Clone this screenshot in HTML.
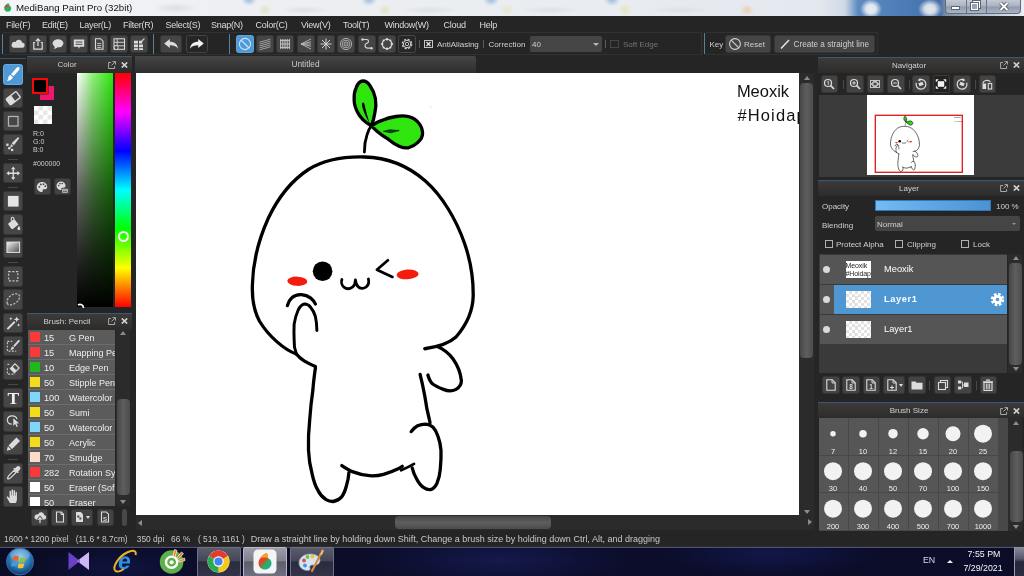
<!DOCTYPE html>
<html>
<head>
<meta charset="utf-8">
<title>MediBang Paint Pro (32bit)</title>
<style>
*{box-sizing:border-box;margin:0;padding:0}
html,body{width:1024px;height:576px;overflow:hidden;background:#252525;font-family:"Liberation Sans",sans-serif;font-size:9px;color:#d8d8d8}
.abs{position:absolute}
#root{position:relative;width:1024px;height:576px;overflow:hidden;background:#252525;will-change:transform}
#title{left:0;top:0;width:1024px;height:16px;background:
radial-gradient(ellipse 11px 10px at 871px 9px,#e9eef4 0,#dfe6ee 45%,rgba(223,230,238,0) 100%),
radial-gradient(ellipse 12px 10px at 930px 9px,#e4e9ee 0,#d5dde6 45%,rgba(213,221,230,0) 100%),
radial-gradient(ellipse 8px 6px at 249px 0px,#9dbde0 0,rgba(157,189,224,0) 100%),
radial-gradient(ellipse 8px 6px at 369px 0px,#9dbde0 0,rgba(157,189,224,0) 100%),
radial-gradient(ellipse 8px 6px at 491px 0px,#9dbde0 0,rgba(157,189,224,0) 100%),
radial-gradient(ellipse 8px 6px at 612px 0px,#9dbde0 0,rgba(157,189,224,0) 100%),
radial-gradient(ellipse 7px 6px at 265px 10px,#e2e2c4 0,rgba(226,226,196,0) 100%),
radial-gradient(ellipse 7px 6px at 385px 10px,#e2e2c4 0,rgba(226,226,196,0) 100%),
radial-gradient(ellipse 7px 6px at 625px 10px,#ebe4b4 0,rgba(235,228,180,0) 100%),
radial-gradient(ellipse 7px 6px at 507px 10px,#e6e6c8 0,rgba(230,230,200,0) 100%),
radial-gradient(ellipse 26px 4px at 305px 10px,#dde0e4 0,rgba(221,224,228,0) 100%),
radial-gradient(ellipse 30px 4px at 430px 10px,#dde0e4 0,rgba(221,224,228,0) 100%),
radial-gradient(ellipse 30px 4px at 550px 10px,#dde0e4 0,rgba(221,224,228,0) 100%),
radial-gradient(ellipse 30px 4px at 680px 10px,#dde0e4 0,rgba(221,224,228,0) 100%),
radial-gradient(ellipse 7px 6px at 747px 10px,#edcdb0 0,rgba(237,205,176,0) 100%),
radial-gradient(ellipse 22px 6px at 175px 8px,#dcdfe3 0,rgba(220,223,227,0) 100%),
linear-gradient(90deg,#f3f5f7 0,#eef0f3 200px,#e9ecf0 600px,#e3e8ef 820px,#cfd9e6 845px,#5d8ac0 858px,#4d7db8 900px,#456fa8 940px,#8090a4 946px,#e6eaf0 1021px,#eef1f5 1024px)}
#title .t{left:16px;top:1px;font-size:9.700px;color:#111;line-height:14px;white-space:nowrap}
#menu{left:0;top:16px;width:1024px;height:16px;background:#252525}
#menu span{position:absolute;top:2.600px;font-size:9px;letter-spacing:-.250px;line-height:12px;color:#dcdcdc;white-space:nowrap}
#tb{left:0;top:32px;width:1024px;height:25px;background:#252525}
.tbtn{position:absolute;top:3px;width:18px;height:18px;border-radius:2.500px;background:#454545;border:1px solid #363636}
.tbtn.sel{background:#4f9ad6;border-color:#5aa6e0}
.tbtn svg{position:absolute;left:0;top:0;width:16px;height:16px}
.vsep{position:absolute;width:1px;background:#56809f}
.lbl{position:absolute;white-space:nowrap;font-size:8px;line-height:11px;color:#d0d0d0}
.phead{position:absolute;height:16px;background:linear-gradient(#3d3b3a,#2d2c2b);border-top:1px solid #35597a;color:#d0d0d0;font-size:8px;line-height:15px;text-align:center}
.tool{position:absolute;left:2.700px;width:20.500px;height:20.500px;border-radius:2.500px;background:#464646;border:1px solid #363636}
.tool.sel{background:#4f9ad6;border-color:#62abe3}
.tool svg{position:absolute;left:0;top:0;width:18.500px;height:18.500px}
.brow{position:absolute;left:0;width:88px;height:14px;background:#5b5b5b;color:#eeeeee;font-size:9.600px;line-height:15.200px;white-space:nowrap;overflow:hidden}
.brow i{position:absolute;left:2.300px;top:2.300px;width:9.800px;height:9.400px}
.brow b{position:absolute;left:16px;font-weight:normal;font-size:9.800px;transform:scaleX(.940);transform-origin:0 50%}
.brow span{position:absolute;left:40.500px;transform:scaleX(.940);transform-origin:0 50%}
.sbtn{position:absolute;width:16px;height:16px;border-radius:2.500px;background:#434343;border:1px solid #343434}
.sbtn svg{position:absolute;left:0;top:0;width:14px;height:14px}
.nbtn{position:absolute;top:18.500px;width:17.500px;height:17.500px;border-radius:2.500px;background:#434343;border:1px solid #343434}
.nbtn svg{position:absolute;left:.750px;top:.750px;width:14px;height:14px}
.bs{position:absolute;width:30px;height:37.500px;background:#565656;border-right:1px solid #484848;border-bottom:1px solid #484848}
.bs i{position:absolute;background:#f2f2f2;border-radius:50%}
.bs span{position:absolute;left:-1px;width:30px;bottom:-1px;text-align:center;font-size:7.500px;line-height:9px;color:#eeeeee}
.thumb{position:absolute;border-radius:4px;background:linear-gradient(90deg,#474747,#5e5e5e 50%,#4c4c4c)}
.thumbh{position:absolute;border-radius:4px;background:linear-gradient(#474747,#5e5e5e 50%,#4c4c4c)}
.track{position:absolute;background:#2b2b2b}
</style>
</head>
<body>
<div id="root">
<!-- TITLE BAR -->
<div id="title" class="abs">
<div class="abs t">MediBang Paint Pro (32bit)</div>
<div class="abs" style="left:945px;top:0;width:76px;height:14px;border:1px solid #5f6c7e;border-top:0;border-radius:0 0 4px 4px;background:linear-gradient(#c3cad4,#a9b2c0 48%,#8f9aac 52%,#aab4c2)"></div>
<div class="abs" style="left:966px;top:0;width:1px;height:13px;background:#66738a"></div>
<div class="abs" style="left:986px;top:0;width:1px;height:13px;background:#66738a"></div>
<div class="abs" style="left:951px;top:5.500px;width:9px;height:4px;background:#fff;border:1px solid #5a6474"></div>
<div class="abs" style="left:973px;top:1px;width:7px;height:7px;border:1.500px solid #fff;outline:1px solid #5a6474"></div>
<div class="abs" style="left:971px;top:3px;width:7px;height:7px;border:1.500px solid #fff;outline:1px solid #5a6474;background:#98a3b4"></div>
<svg class="abs" style="left:998px;top:1.500px" width="12" height="9" viewBox="0 0 12 9"><path d="M2.500 1l7 7M9.500 1l-7 7" stroke="#4a5464" stroke-width="3.600"/><path d="M2.500 1l7 7M9.500 1l-7 7" stroke="#fff" stroke-width="1.900"/></svg>
<svg class="abs" style="left:1px;top:1px" width="13" height="13" viewBox="0 0 13 13"><circle cx="6.500" cy="6.500" r="6" fill="#f4f4f4"/><path d="M7.500 2C5 3 3.200 5 3.200 7.300c0 2 1.500 3.500 3.500 3.500s3.500-1.500 3.500-3.500c0-1.300-.8-2.300-1.900-2.800.2-1-.1-1.800-.8-2.500z" fill="#28b060"/><path d="M3.300 6.600c1 .5 3.200 0 5-2.100-2-1-4.300 0-5 2.100z" fill="#e8402a"/><path d="M7 9.500c1.500 0 2.800-1 3-2.500-.5 1-2 2-3 2.500z" fill="#18a8d8"/></svg>
</div>
<!-- MENU -->
<div id="menu" class="abs">
<span style="left:6px">File(F)</span>
<span style="left:42px">Edit(E)</span>
<span style="left:79.5px">Layer(L)</span>
<span style="left:123px">Filter(R)</span>
<span style="left:165.5px">Select(S)</span>
<span style="left:211px">Snap(N)</span>
<span style="left:255.5px">Color(C)</span>
<span style="left:301px">View(V)</span>
<span style="left:343px">Tool(T)</span>
<span style="left:384.5px">Window(W)</span>
<span style="left:443.5px">Cloud</span>
<span style="left:479.5px">Help</span>
</div>
<!-- TOOLBAR -->
<div id="tb" class="abs">
<div class="vsep" style="left:2px;top:2px;height:20px"></div>
<div class="tbtn " style="left:9px;width:18px"><svg viewBox="0 0 16 16"><path d="M3.800 11.800h8.200a2.500 2.500 0 0 0 .3-5A3.500 3.500 0 0 0 5.600 6 2.900 2.900 0 0 0 3.800 11.800z" fill="#dcdcdc"/></svg></div>
<div class="tbtn " style="left:29px;width:18px"><svg viewBox="0 0 16 16"><path d="M5.200 6.500H3.800v6.700h8.400V6.500h-1.400" fill="none" stroke="#dcdcdc" stroke-width="1.200"/><path d="M8 10V3.200M5.800 5.200 8 2.800l2.200 2.400" fill="none" stroke="#dcdcdc" stroke-width="1.200"/></svg></div>
<div class="tbtn " style="left:49px;width:18px"><svg viewBox="0 0 16 16"><ellipse cx="8" cy="7.300" rx="5.400" ry="4" fill="#dcdcdc"/><path d="M5 10l-.8 3.200L8 11z" fill="#dcdcdc"/></svg></div>
<div class="tbtn " style="left:70px;width:18px"><svg viewBox="0 0 16 16"><path d="M2.800 3.500h10.400v7.300H9l-1.500 2.200V10.800H2.800z" fill="#dcdcdc"/><path d="M4.600 6h6.800M4.600 8.300h6.800" stroke="#454545" stroke-width="1"/></svg></div>
<div class="tbtn " style="left:90px;width:18px"><svg viewBox="0 0 16 16"><path d="M4.500 2.700h5L12 5.200v8.100H4.500z" fill="none" stroke="#dcdcdc" stroke-width="1.100"/><path d="M6.200 7.500h4M6.200 9.500h4M6.200 11.500h4" stroke="#dcdcdc" stroke-width=".8"/></svg></div>
<div class="tbtn " style="left:110px;width:18px"><svg viewBox="0 0 16 16"><rect x="3" y="2.800" width="10.500" height="10.500" fill="none" stroke="#dcdcdc" stroke-width="1"/><path d="M3 6.300h10.500M3 9.800h10.500M6.200 2.800v10.500" stroke="#dcdcdc" stroke-width=".9"/><circle cx="5.200" cy="11.600" r="2" fill="#454545" stroke="#dcdcdc" stroke-width=".9"/></svg></div>
<div class="tbtn " style="left:130px;width:18px"><svg viewBox="0 0 16 16"><path d="M3 4.800h4v2.800H3zM8 4.800h3.200v2.800H8zM3 8.500h4v2.800H3zM8 8.500h4v2.800H8zM3 12.200h4V14H3zM8 12.200h4V14H8z" fill="#dcdcdc"/><path d="M10.800 5.200l2.600-2.600" stroke="#dcdcdc" stroke-width="1.200"/></svg></div>
<div class="vsep" style="left:153px;top:2px;height:20px"></div>
<div class="tbtn " style="left:160px;width:22px"><svg viewBox="0 0 20 16" style="width:20px"><path d="M3.200 7.400 8.800 3v2.700c4.800 0 7.800 2.400 8.200 7-1.900-2.700-4.300-3.500-8.200-3.500v2.700z" fill="#dcdcdc"/></svg></div>
<div class="tbtn" style="left:186px;width:22px;background:#262626;border-color:#444"><svg viewBox="0 0 20 16" style="width:20px"><path d="M16.800 7.400 11.200 3v2.700c-4.800 0-7.800 2.400-8.200 7 1.900-2.700 4.300-3.500 8.200-3.500v2.700z" fill="#f2f2f2"/></svg></div>
<div class="vsep" style="left:229px;top:2px;height:20px"></div>
<div class="tbtn sel" style="left:236px;width:18px"><svg viewBox="0 0 16 16"><circle cx="8" cy="8" r="5.600" fill="none" stroke="#cfe4f8" stroke-width="1.100"/><path d="M4 4l8 8" stroke="#cfe4f8" stroke-width="1.100"/></svg></div>
<div class="tbtn " style="left:256px;width:18px"><svg viewBox="0 0 16 16"><path d="M2.500 6.200 13.500 3.200M2.500 8.100 13.500 5.100M2.500 10 13.500 7M2.500 11.900 13.500 8.900M2.500 13.800 13.500 10.800" stroke="#a8a8a8" stroke-width=".9"/></svg></div>
<div class="tbtn " style="left:276px;width:18px"><svg viewBox="0 0 16 16"><path d="M3.500 3v10M5.300 3v10M7.100 3v10M8.900 3v10M10.700 3v10M12.500 3v10M3 4.500h10M3 8h10M3 11.500h10" stroke="#c4c4c4" stroke-width=".9"/></svg></div>
<div class="tbtn " style="left:297px;width:18px"><svg viewBox="0 0 16 16"><path d="M3 8 13 3M3 8l10-2.200M3 8h10M3 8l10 2.200M3 8l10 5" stroke="#bcbcbc" stroke-width=".9"/></svg></div>
<div class="tbtn " style="left:317px;width:18px"><svg viewBox="0 0 16 16"><path d="M8 2.500v11M2.500 8h11M4 4l8 8M12 4l-8 8" stroke="#d4d4d4" stroke-width="1"/></svg></div>
<div class="tbtn " style="left:337px;width:18px"><svg viewBox="0 0 16 16"><circle cx="8" cy="8" r="5.600" fill="none" stroke="#b8b8b8" stroke-width=".9"/><circle cx="8" cy="8" r="3.800" fill="none" stroke="#b8b8b8" stroke-width=".9"/><circle cx="8" cy="8" r="2" fill="none" stroke="#b8b8b8" stroke-width=".9"/><circle cx="8" cy="8" r=".7" fill="#b8b8b8"/></svg></div>
<div class="tbtn " style="left:358px;width:18px"><svg viewBox="0 0 16 16"><path d="M3.500 3.500h4.200c2.400 0 2.400 3.200 0 3.800-2.600.8-2.200 4.600.8 4.900h3.500" fill="none" stroke="#d4d4d4" stroke-width="1.200"/><circle cx="3.500" cy="3.500" r="1.200" fill="#d4d4d4"/><circle cx="12.500" cy="12.200" r="1.200" fill="#d4d4d4"/></svg></div>
<div class="tbtn " style="left:378px;width:18px"><svg viewBox="0 0 16 16"><circle cx="8" cy="8" r="4.800" fill="none" stroke="#dadada" stroke-width="1.100"/><circle cx="8" cy="3.200" r="1.200" fill="#dadada"/><circle cx="8" cy="12.800" r="1.200" fill="#dadada"/><circle cx="3.200" cy="8" r="1.200" fill="#dadada"/><circle cx="12.800" cy="8" r="1.200" fill="#dadada"/><circle cx="4.600" cy="4.600" r="1" fill="#dadada"/><circle cx="11.400" cy="4.600" r="1" fill="#dadada"/><circle cx="4.600" cy="11.400" r="1" fill="#dadada"/><circle cx="11.400" cy="11.400" r="1" fill="#dadada"/></svg></div>
<div class="tbtn" style="left:398px;background:#262626;border-color:#484848"><svg viewBox="0 0 16 16"><circle cx="8" cy="8" r="4.600" fill="none" stroke="#c4c4c4" stroke-width="1.500" stroke-dasharray="2.200 1.410"/><circle cx="8" cy="8" r="3.700" fill="none" stroke="#c4c4c4" stroke-width="1"/><circle cx="8" cy="8" r="1.700" fill="none" stroke="#c4c4c4" stroke-width="1"/></svg></div>
<div class="vsep" style="left:419px;top:8px;height:8px;background:#5c5c5c"></div>
<div class="abs" style="left:424px;top:8px;width:9px;height:8px;border:1px solid #c4c4c4"><svg class="abs" style="left:0;top:0" width="7" height="6" viewBox="0 0 7 6"><path d="M1.500 1l4 4M5.500 1l-4 4" stroke="#e6e6e6" stroke-width="1.300"/></svg></div>
<span class="lbl" style="left:437px;top:7px">AntiAliasing</span>
<div class="vsep" style="left:483px;top:8px;height:8px;background:#5c5c5c"></div>
<span class="lbl" style="left:488.500px;top:7px">Correction</span>
<div class="abs" style="left:530px;top:4px;width:72px;height:15.500px;background:#454545;border-radius:2px"><span class="lbl" style="left:2px;top:3px">40</span><div class="abs" style="left:63px;top:6.500px;border:3px solid transparent;border-top:3px solid #b8b8b8;border-bottom:0"></div></div>
<div class="vsep" style="left:605px;top:8px;height:8px;background:#5c5c5c"></div>
<div class="abs" style="left:610px;top:8px;width:9px;height:8px;border:1px solid #454545"></div>
<span class="lbl" style="left:623px;top:7px;color:#747474">Soft Edge</span>
<div class="abs" style="left:705px;top:0px;width:173px;height:23px;border:1px solid #313131;border-left:0"></div>
<div class="abs" style="left:3px;top:0px;width:699px;height:23px;border:1px solid #313131;border-left:0"></div>
<div class="vsep" style="left:704px;top:1px;height:21px"></div>
<span class="lbl" style="left:709.500px;top:7px">Key</span>
<div class="abs" style="left:725px;top:3px;width:46px;height:18px;background:#454545;border:1px solid #363636;border-radius:2.500px"><svg class="abs" style="left:2px;top:1px" width="14" height="14" viewBox="0 0 14 14"><circle cx="7" cy="7" r="5.400" fill="none" stroke="#d4d4d4" stroke-width="1.100"/><path d="M3.200 3.200l7.600 7.600" stroke="#d4d4d4" stroke-width="1.100"/></svg><span class="lbl" style="left:18px;top:3px">Reset</span></div>
<div class="abs" style="left:774px;top:3px;width:101px;height:18px;background:#454545;border:1px solid #363636;border-radius:2.500px"><svg class="abs" style="left:4px;top:2px" width="12" height="12" viewBox="0 0 12 12"><path d="M2 10.500 10 2" stroke="#e4e4e4" stroke-width="1.500"/></svg><span class="lbl" style="left:18.500px;top:3px;font-size:8.200px">Create a straight line</span></div>
</div>
<!-- LEFT TOOLS -->
<div id="tools" class="abs" style="left:0;top:57px;width:27px;height:474px;background:#252525">
<div class="abs" style="left:0;top:1px;width:26px;height:1px;background:#35546e"></div>
<div class="tool sel" style="top:7.3px"><svg viewBox="0 0 19 19"><path d="M15.300 2.300c.9.600 1 1.600.3 2.500L9.800 11.600 7.200 9.400l6-6.800c.6-.7 1.400-.8 2.100-.3z" fill="#fff"/><path d="M6.400 10.200 9 12.400c-.3 2.200-2.600 4.200-6.400 3.800 1.500-.9 1.600-2 1.800-3.200.2-1.300.8-2.400 2-2.800z" fill="#fff"/></svg></div>
<div class="tool" style="top:30.6px"><svg viewBox="0 0 19 19"><g transform="rotate(-38 9.500 9.500)"><rect x="3" y="5.700" width="13" height="7.600" rx="1" fill="none" stroke="#dcdcdc" stroke-width="1.400"/><rect x="3" y="5.700" width="6.500" height="7.600" rx="1" fill="#dcdcdc"/></g></svg></div>
<div class="tool" style="top:53.9px"><svg viewBox="0 0 19 19"><rect x="4.600" y="4.600" width="9.800" height="9.800" fill="none" stroke="#b4b4b4" stroke-width="1.300"/></svg></div>
<div class="tool" style="top:77.2px"><svg viewBox="0 0 19 19"><path d="M15.800 3.200 10.200 10.400 7.800 8.400 14.300 2.200z" fill="#dcdcdc"/><path d="M7.200 9.200 9.500 11.200 6.200 13z" fill="#dcdcdc"/><rect x="2.300" y="8.800" width="2.400" height="2.400" fill="#dcdcdc"/><rect x="4.600" y="11.600" width="2.400" height="2.400" fill="#dcdcdc" opacity=".0"/><rect x="4.300" y="12.400" width="2.300" height="2.300" fill="#dcdcdc"/><rect x="7.200" y="14.200" width="2.300" height="2.300" fill="#dcdcdc"/></svg></div>
<div class="tool" style="top:105.7px"><svg viewBox="0 0 19 19"><path d="M9.500 2.500 11.800 5.300h-1.600v3.500H13.700V7.200l2.800 2.300-2.800 2.300v-1.600h-3.500v3.500h1.600L9.500 16.500 7.200 13.700h1.600v-3.500H5.300v1.600L2.500 9.500l2.800-2.300v1.600h3.500V5.300H7.200z" fill="#dcdcdc"/></svg></div>
<div class="tool" style="top:133.8px"><svg viewBox="0 0 19 19"><rect x="4" y="4" width="11" height="11" fill="#e4e4e4"/></svg></div>
<div class="tool" style="top:157.1px"><svg viewBox="0 0 19 19"><path d="M5 8.200 10.500 4l4.500 5.800-5.600 4.400c-.7.500-1.500.4-2-.3L4.600 10c-.5-.7-.3-1.300.4-1.800z" fill="#dcdcdc"/><path d="M7.500 6.200V3.600c0-1.600 2.600-1.600 2.600 0v1" fill="none" stroke="#dcdcdc" stroke-width="1.100"/><path d="M15.300 11c.9 1.500 1.500 2.400 1.500 3.200a1.500 1.500 0 0 1-3 0c0-.8.600-1.700 1.500-3.200z" fill="#dcdcdc"/></svg></div>
<div class="tool" style="top:180.4px"><svg viewBox="0 0 19 19"><defs><linearGradient id="gg" x1="0" y1="0" x2="1" y2="1"><stop offset="0" stop-color="#f4f4f4"/><stop offset="1" stop-color="#4c4c4c"/></linearGradient></defs><rect x="3" y="4.200" width="13" height="10.600" fill="url(#gg)" stroke="#dcdcdc" stroke-width="1.100"/></svg></div>
<div class="tool" style="top:209.0px"><svg viewBox="0 0 19 19"><rect x="4.800" y="4.800" width="9.400" height="9.400" fill="none" stroke="#c8c8c8" stroke-width="1.200" stroke-dasharray="2.100 1.600"/></svg></div>
<div class="tool" style="top:232.3px"><svg viewBox="0 0 19 19"><path d="M3.500 14C1.800 10.500 5.500 5 11.200 4c4.400-.8 6 2.400 3.800 6.200-2.200 3.700-9.300 7-11.500 3.800z" fill="none" stroke="#bdbdbd" stroke-width="1.300" stroke-dasharray="2.200 1.400"/></svg></div>
<div class="tool" style="top:255.6px"><svg viewBox="0 0 19 19"><path d="M3.500 15.500 11 8" stroke="#dcdcdc" stroke-width="2"/><path d="M13 2.500l.8 2.200 2.200.8-2.200.8L13 8.500l-.8-2.200L10 5.500l2.200-.8zM7 3l.5 1.300L8.800 4.800l-1.300.5L7 6.600l-.5-1.300L5.200 4.800l1.300-.5zM15 9.500l.5 1.300 1.300.5-1.300.5-.5 1.300-.5-1.300-1.300-.5 1.300-.5z" fill="#dcdcdc"/></svg></div>
<div class="tool" style="top:278.9px"><svg viewBox="0 0 19 19"><path d="M3.500 5.500v9h9" fill="none" stroke="#c8c8c8" stroke-width="1.100" stroke-dasharray="2 1.400"/><path d="M3.500 4.500h5" fill="none" stroke="#c8c8c8" stroke-width="1.100" stroke-dasharray="2 1.400"/><path d="M15.800 3.200c.5.400.5 1 .1 1.500l-5 5.600-1.400-1.200 5-5.700c.4-.4.900-.5 1.300-.2zM9 9.800l1.300 1.200c-.2 1.400-1.600 2.400-3.800 2.300.9-.6.900-1.300 1-2 .1-.7.600-1.300 1.500-1.500z" fill="#dcdcdc"/></svg></div>
<div class="tool" style="top:302.2px"><svg viewBox="0 0 19 19"><path d="M3.500 8.500v6h8" fill="none" stroke="#c8c8c8" stroke-width="1.100" stroke-dasharray="2 1.400"/><path d="M3.500 4.500h3" fill="none" stroke="#c8c8c8" stroke-width="1.100" stroke-dasharray="2 1.400"/><path d="M6.500 8.800 11.300 4l4.200 4.200-4.800 4.800z" fill="none" stroke="#dcdcdc" stroke-width="1.200"/><path d="M6.500 8.800 8.700 6.600l4.200 4.200-2.200 2.200z" fill="#dcdcdc"/></svg></div>
<div class="tool" style="top:330.8px"><svg viewBox="0 0 19 19"><text x="9.500" y="15.800" font-family="Liberation Serif,serif" font-weight="bold" font-size="18" text-anchor="middle" fill="#f0f0f0">T</text></svg></div>
<div class="tool" style="top:354.1px"><svg viewBox="0 0 19 19"><path d="M9.500 6.500l6 5-2.700.3 1.500 3-1.300.6-1.500-3-2 1.700z" fill="#dcdcdc"/><path d="M8 12.500c-3 0-4.500-1.700-4.500-4.200C3.500 5.600 5.600 4 8.500 4c2.500 0 4.300 1.200 4.700 3.300" fill="none" stroke="#dcdcdc" stroke-width="1.200"/></svg></div>
<div class="tool" style="top:377.4px"><svg viewBox="0 0 19 19"><path d="M12.800 2.500 16.500 6.200 8.300 14.400 4.600 10.700z" fill="#dcdcdc"/><path d="M4 11.600 7.400 15l-4.600 1.200z" fill="#dcdcdc"/></svg></div>
<div class="tool" style="top:406.0px"><svg viewBox="0 0 19 19"><path d="M13 2.800c1-1 2.400-.8 3.200 0 .8.800 1 2.200 0 3.200l-1.700 1.700.7.700-1.200 1.200-4.600-4.600 1.200-1.200.7.700z" fill="#dcdcdc"/><path d="M10.300 6.600 4.500 12.400l-.9 2.400.6.600 2.400-.9 5.800-5.800z" fill="none" stroke="#dcdcdc" stroke-width="1.200"/></svg></div>
<div class="tool" style="top:429.3px"><svg viewBox="0 0 19 19"><path d="M6.200 16.500c-1-1.400-2.600-4-3.300-5.600-.4-.9.600-1.600 1.300-.8l1.500 1.800V4.700c0-1.100 1.500-1.100 1.500 0v4h.5V3.300c0-1.100 1.600-1.100 1.600 0v5.400h.5V4c0-1.100 1.500-1.100 1.500 0v5h.5V5.700c0-1.100 1.500-1.100 1.500 0v6.500c0 1.800-.5 3-1.300 4.300z" fill="#dcdcdc"/></svg></div>
<div class="abs" style="left:8px;top:101.6px;width:10px;height:1px;background:#484848"></div>
<div class="abs" style="left:8px;top:129.7px;width:10px;height:1px;background:#484848"></div>
<div class="abs" style="left:8px;top:204.8px;width:10px;height:1px;background:#484848"></div>
<div class="abs" style="left:8px;top:326.6px;width:10px;height:1px;background:#484848"></div>
<div class="abs" style="left:8px;top:401.8px;width:10px;height:1px;background:#484848"></div>
</div>
<!-- COLOR PANEL -->
<div id="color" class="abs" style="left:27px;top:56px;width:107px;height:255px">
<div class="phead" style="left:0;top:0;width:105px;height:17px"><span class="abs" style="left:0;width:80px;text-align:center">Color</span><svg class="abs" style="right:16.500px;top:3.500px" width="8" height="8" viewBox="0 0 8 8"><path d="M3 1.500H.6v6h6V5" fill="none" stroke="#a8a8a8" stroke-width="1"/><path d="M3.500 4.500 7.300.7M4.500.6h3v3" fill="none" stroke="#a8a8a8" stroke-width="1"/></svg><svg class="abs" style="right:4.500px;top:4.500px" width="7" height="6" viewBox="0 0 7 6"><path d="M.8.500l5.400 5M6.200.5.800 5.500" stroke="#d2d2d2" stroke-width="1.700"/></svg></div>
<div class="abs" style="left:0;top:1px;width:107px;height:254px">
<div class="abs" style="left:13px;top:29px;width:14px;height:14px;background:#f0186c"></div>
<div class="abs" style="left:5px;top:20.500px;width:16px;height:16px;background:#000;border:2px solid #f40a0a;box-shadow:0 0 0 .5px #252525"></div>
<div class="abs" style="left:7px;top:49px;width:18px;height:18px;background:#fff;background-image:linear-gradient(45deg,#e6e6e6 25%,transparent 25%,transparent 75%,#e6e6e6 75%),linear-gradient(45deg,#e6e6e6 25%,transparent 25%,transparent 75%,#e6e6e6 75%);background-size:9px 9px;background-position:0 0,4.500px 4.500px"></div>
<span class="lbl" style="left:6px;top:72.7px;font-size:7px;line-height:8px;color:#cacaca">R:0</span>
<span class="lbl" style="left:6px;top:81px;font-size:7px;line-height:8px;color:#cacaca">G:0</span>
<span class="lbl" style="left:6px;top:89.2px;font-size:7px;line-height:8px;color:#cacaca">B:0</span>
<span class="lbl" style="left:6px;top:103px;font-size:7px;line-height:8px;color:#cacaca">#000000</span>
<div class="sbtn" style="left:6.800px;top:121.300px;width:17px;height:17px"><div class="abs" style="left:.500px;top:.500px;width:14px;height:14px"><svg viewBox="0 0 14 14"><path d="M7 2C4 2 1.800 4.200 1.800 7c0 2.800 2.200 5 5 5 .9 0 1.200-.6.900-1.200-.4-.8.100-1.600 1-1.600h1.500c1.300 0 2-1 2-2.200C12.200 4 10 2 7 2z" fill="#dcdcdc"/><circle cx="4.300" cy="6.800" r=".9" fill="#434343"/><circle cx="5.800" cy="4.400" r=".9" fill="#434343"/><circle cx="8.500" cy="4.200" r=".9" fill="#434343"/><circle cx="10.300" cy="6.200" r=".9" fill="#434343"/></svg></div></div>
<div class="sbtn" style="left:26.800px;top:121.300px;width:17px;height:17px"><div class="abs" style="left:.500px;top:.500px;width:14px;height:14px"><svg viewBox="0 0 14 14"><path d="M6 1.500C3.500 1.500 1.500 3.400 1.500 5.800c0 2.400 1.900 4.300 4.300 4.300.8 0 1-.5.800-1-.3-.7.100-1.400.9-1.400h1.300c1.100 0 1.700-.9 1.700-1.900C10.500 3.200 8.600 1.500 6 1.500z" fill="#dcdcdc"/><circle cx="3.700" cy="5.600" r=".8" fill="#434343"/><circle cx="5" cy="3.600" r=".8" fill="#434343"/><circle cx="7.300" cy="3.500" r=".8" fill="#434343"/><rect x="7" y="8.500" width="6" height="4.500" fill="#dcdcdc" stroke="#434343" stroke-width=".6"/><path d="M8 10h4M8 11.500h4" stroke="#434343" stroke-width=".7"/></svg></div></div>
<div class="abs" style="left:49.500px;top:16px;width:36px;height:234px;background:linear-gradient(to bottom,rgba(0,0,0,0) 0,rgba(0,0,0,.300) 25%,rgba(0,0,0,.600) 50%,rgba(0,0,0,.820) 75%,#000 100%),linear-gradient(to right,#fff 0,#8cf078 45%,#2fe610 100%)"></div>
<svg class="abs" style="left:50px;top:243px" width="10" height="8" viewBox="0 0 10 8"><path d="M1 5a3.500 3.500 0 0 1 5.500 2.900" fill="none" stroke="#fff" stroke-width="1.600"/></svg>
<div class="abs" style="left:88px;top:16px;width:15.500px;height:234px;background:linear-gradient(to bottom,#ff0000 0%,#ff00ff 16.600%,#0000ff 33.300%,#00ffff 50%,#00ff00 66.600%,#ffff00 83.300%,#ff0000 100%)"></div>
<div class="abs" style="left:90.500px;top:173.500px;width:11px;height:11px;border-radius:50%;border:2.400px solid #f4f4f4"></div>
</div>
</div>
<!-- BRUSH PANEL -->
<div id="brush" class="abs" style="left:27px;top:312.700px;width:107px;height:218.300px">
<div class="phead" style="left:0;top:0;width:105px;height:17px"><span class="abs" style="left:0;width:80px;text-align:center">Brush: Pencil</span><svg class="abs" style="right:16.500px;top:3.500px" width="8" height="8" viewBox="0 0 8 8"><path d="M3 1.500H.6v6h6V5" fill="none" stroke="#a8a8a8" stroke-width="1"/><path d="M3.500 4.500 7.300.7M4.500.6h3v3" fill="none" stroke="#a8a8a8" stroke-width="1"/></svg><svg class="abs" style="right:4.500px;top:4.500px" width="7" height="6" viewBox="0 0 7 6"><path d="M.8.500l5.400 5M6.200.5.800 5.500" stroke="#d2d2d2" stroke-width="1.700"/></svg></div>
<div class="abs" style="left:1px;top:17.400px;width:86.800px;height:175.900px;overflow:hidden;background:#6c6c6c">
<div class="brow" style="top:0px"><i style="background:#f83a3a"></i><b>15</b><span>G Pen</span></div>
<div class="brow" style="top:15px"><i style="background:#f83a3a"></i><b>15</b><span>Mapping Pen</span></div>
<div class="brow" style="top:30px"><i style="background:#20b81c"></i><b>10</b><span>Edge Pen</span></div>
<div class="brow" style="top:45px"><i style="background:#f2dc1c"></i><b>50</b><span>Stipple Pen</span></div>
<div class="brow" style="top:60px"><i style="background:#7fd6fb"></i><b>100</b><span>Watercolor</span></div>
<div class="brow" style="top:75px"><i style="background:#f2dc1c"></i><b>50</b><span>Sumi</span></div>
<div class="brow" style="top:90px"><i style="background:#7fd6fb"></i><b>50</b><span>Watercolor</span></div>
<div class="brow" style="top:105px"><i style="background:#f2dc1c"></i><b>50</b><span>Acrylic</span></div>
<div class="brow" style="top:120px"><i style="background:#fbdcc8"></i><b>70</b><span>Smudge</span></div>
<div class="brow" style="top:135px"><i style="background:#f83a3a"></i><b>282</b><span>Rotation Symmetry</span></div>
<div class="brow" style="top:150px"><i style="background:#ffffff"></i><b>50</b><span>Eraser (Soft)</span></div>
<div class="brow" style="top:165px"><i style="background:#ffffff"></i><b>50</b><span>Eraser</span></div>
</div>
<div class="track" style="left:88.500px;top:17.400px;width:14.500px;height:175.900px"></div>
<div class="thumb" style="left:89.500px;top:86px;width:13.300px;height:96.800px"></div>
<div class="abs" style="left:92.9px;top:18.7px;border:3.1px solid transparent;border-bottom:4.6px solid #8c8c8c;border-top:0"></div>
<div class="abs" style="left:92.9px;top:187.5px;border:3.1px solid transparent;border-top:4.6px solid #8c8c8c;border-bottom:0"></div>
<div class="sbtn" style="left:4.250px;top:196.300px;width:17px;height:17px"><div class="abs" style="left:.500px;top:.500px;width:14px;height:14px"><svg viewBox="0 0 14 14"><path d="M3.300 9.500h7.600a2.200 2.200 0 0 0 .2-4.400A3 3 0 0 0 5.200 4.500 2.500 2.500 0 0 0 3.300 9.500z" fill="#dcdcdc"/><path d="M7 13V7.500M5 9.500l2-2.300 2 2.300" stroke="#434343" stroke-width="2.200" fill="none"/><path d="M7 13V8M5.300 9.600 7 7.700l1.700 1.900" stroke="#dcdcdc" stroke-width="1.200" fill="none"/></svg></div></div>
<div class="sbtn" style="left:24px;top:196.300px;width:17px;height:17px"><div class="abs" style="left:.500px;top:.500px;width:14px;height:14px"><svg viewBox="0 0 14 14"><path d="M3.500 2h4.800L10.500 4.200V12h-7z" fill="none" stroke="#dcdcdc" stroke-width="1.100"/><path d="M8 2v2.500h2.500" fill="none" stroke="#dcdcdc" stroke-width="1"/></svg></div></div>
<div class="sbtn" style="left:44.250px;top:196.300px;width:22px;height:17px"><div class="abs" style="left:.500px;top:.500px;width:14px;height:14px"><svg viewBox="0 0 14 14"><path d="M3 2h4.800L10 4.200V12H3z" fill="#dcdcdc"/><rect x="4.300" y="5.500" width="2" height="2" fill="#434343"/><rect x="6.300" y="7.500" width="2" height="2" fill="#434343"/></svg></div><div class="abs" style="left:13.500px;top:6.500px;border:2.600px solid transparent;border-top:3px solid #ddd;border-bottom:0"></div></div>
<div class="sbtn" style="left:69.900px;top:196.300px;width:17px;height:17px"><div class="abs" style="left:.500px;top:.500px;width:14px;height:14px"><svg viewBox="0 0 14 14"><path d="M3.500 2h4.800L10.500 4.200V12h-7z" fill="none" stroke="#dcdcdc" stroke-width="1.100"/><text x="7" y="10.500" font-size="6" font-family="Liberation Sans,sans-serif" fill="#dcdcdc" text-anchor="middle" font-weight="bold">S</text></svg></div></div>
<div class="abs" style="left:94.900px;top:196.100px;width:5.600px;height:17.300px;background:#484848;border-radius:2.500px"></div>
</div>
<!-- CANVAS -->
<div id="canvaswrap" class="abs" style="left:135px;top:57px;width:682px;height:474px">
<div class="abs" style="left:0;top:-1px;width:341px;height:17px;background:linear-gradient(#464646,#383838 55%,#2f2f2f);border-radius:0 2px 0 0;text-align:center;font-size:8.300px;line-height:16px;color:#cacaca">Untitled</div>
<div class="abs" id="cv" style="left:.600px;top:16px;width:663.400px;height:442px;background:#fff;overflow:hidden">
<svg class="abs" style="left:0;top:0" width="663.400" height="442" viewBox="135.600 73 663.400 442">
<g fill="none" stroke="#000" stroke-width="3.3" stroke-linecap="round" stroke-linejoin="round">
<path d="M296 354C284 350 268 336 259 321 253 310 251.500 298 252 285 252.500 262 258 240 268 218 278 197 292 180 308 169.500 325 159 345 156.500 364 157 386 157.500 408 166 425 181 442 196 456 220 464 243 470 260 473 280 472.800 296 472.500 310 466 325 455.600 337 449 343 440 346.500 424.400 348.750"/>
<path d="M437 346.500C443 349 448.500 353.500 452.500 358.750 457 365 460 371 461 380.600 461 384.500 459 387.500 455.600 389.400 451.500 391.500 447 391 443 389.400 438.500 387.500 435 386 432 383.750 429.500 381.500 428.500 378.500 427.500 375"/>
<path d="M296 354C294 349 293.500 344 293.750 340 293.500 335 293.500 329 293.750 324 294.500 319 296 314 297.800 310 299.500 306.500 301.500 304.500 304 304 306.500 304 308.500 305 310 307 312.500 310 314 313 315 316.500 316 321 316.500 326 316.500 330.600" stroke-width="2.9699999999999998"/>
<path d="M287 305.600C288 302 289.500 299.500 291.500 297.800 294 295.500 297.500 294.500 301 294.700 304.500 295 307.500 296 310 297.800 312 299.500 314 301.500 315 304"/>
<path d="M296 354C298 356.500 300 358.500 302.500 360 306 362.500 310.500 364.500 315 366.500"/>
<path d="M315 368C314 375 313 382 312.500 390 311 400 310 410 309.300 420 308 432 307.800 442 308.100 450.300 308.500 459 309.800 467 311.700 473.800 313 480 315 486 317.500 490.200 319.500 494.500 322.500 497.500 325.700 499.600 328 501 330.500 501.600 332.800 501.500 336 501 339 499.500 341 497.200 343.500 494 345 490 346.100 485.500 347.500 481 348.200 477 348.500 472.600"/>
<path d="M341.400 465.600C345 468 348.500 470.300 352.700 471.900 358 474 363.500 475.300 369.100 475.700 374 476 379 475.500 383.200 474.300 388 473 393 471.200 397.200 469.100 399 468.200 400.500 467.200 401.900 466.300"/>
<path d="M400.700 470.300C405 468.500 409.500 466.300 413.600 463.900" stroke-width="2.8049999999999997"/>
<path d="M411.800 467.900C412.800 472 414.200 475.500 416 478.500 418 482.500 420.200 485.500 423 487.400 425.200 489 427.500 489.900 430 489.700 432.800 489 435 486.500 436.600 483.200 438.500 479 439.500 474 439.900 469.100 440.500 463 440.800 456.500 440.600 450.300 440.200 445 439.200 440.500 437.600 436.300 436.300 432.500 434.600 429.300 432.400 426.900 430.500 425.200 428 424.200 425.400 424.100 422.500 424.200 419.700 424.700 417.200 425.700 414.700 427 412.600 429 410.800 431.600"/>
<path d="M419.700 374.400C421.500 381.500 423 388.500 424.400 396 425.500 404 427 412 429 419.700 429.400 421 429.500 422 429.600 423"/>
<path d="M387.500 260.300 376.500 269.700 392 276.900" stroke-width="2.8"/>
<path d="M341.500 279.500C340.500 282 341.500 285.500 343.500 287.200 346 289.200 349.500 289 352 287.200 354 285.500 355 283 355 280 355.300 283 356.200 285.500 358 287 360.500 288.800 364 288.600 366 286.800 368 285 368.800 282 368 279" stroke-width="2.8"/>
<path d="M364 152C364 146 364.800 140 366.700 134.500 367.800 131 369.200 128 370.900 125.900" stroke-width="2.800"/>
</g>
<path d="M370.900 125.900C364 122 359.500 117 357.300 112.600 355 108 353.750 104 353.750 100 353.500 95 354.200 91 355.800 87.600 357.200 84 359.500 81.300 362 81 365 80.800 368 83 369.800 86 372.200 89.500 374.200 94 375 98.500 375.700 103 375.600 108 374.500 112.600 373.800 117.500 372.500 122 370.900 125.900Z" fill="#30e410" stroke="#000" stroke-width="3.3" stroke-linejoin="round"/>
<path d="M370.900 125.900C374 123.500 377.500 121.800 381.500 120.400 386 118.500 391 117.200 395.600 116.500 400 115.800 404.200 115.800 408 116.500 412 117.500 415.200 119.300 417.500 122 420.200 125 422 129 422.200 133 422.200 136.500 420.500 139.800 417.500 142.300 415 144.800 411.500 146.600 408 147.800 405 148.300 401.800 147.500 398.750 146.200 394.800 144.500 391.200 142 387.800 139.200 384 136.800 380.300 134.200 376.900 131.400 374.700 129.600 372.700 127.700 370.900 125.900Z" fill="#30e410" stroke="#000" stroke-width="3.3" stroke-linejoin="round"/>
<path d="M362.300 102.500C361.300 103.500 361.600 106 362.200 108 363.800 113.500 366.300 118.500 369.300 123.500 367.500 117.500 365.500 111.500 364.300 105 364 103.500 363.300 102 362.300 102.500Z" fill="#000"/>
<path d="M383 131.300 389.500 129.800 398.750 130.600 390.500 132.800Z" fill="#052" stroke="#000" stroke-width=".6"/>
<circle cx="322.200" cy="271.250" r="9.800" fill="#000"/>
<ellipse cx="296.900" cy="281.250" rx="10" ry="4.600" fill="#f41b0f" transform="rotate(3 296.900 281.250)"/>
<ellipse cx="407.200" cy="274.400" rx="11" ry="4.900" fill="#f41b0f" transform="rotate(-4 407.200 274.400)"/>
<path d="M429.500 106l1.600 2" stroke="#cfeab8" stroke-width="1"/>
<text x="736.500" y="96.800" font-family="Liberation Sans,sans-serif" font-size="16.500" fill="#111">Meoxik</text>
<text x="737" y="120.800" font-family="Liberation Sans,sans-serif" font-size="16.500" letter-spacing="1.150" fill="#111">#Hoidap</text>
</svg>
</div>
<div class="track" style="left:664px;top:16px;width:15px;height:442px"></div>
<div class="thumb" style="left:665px;top:26px;width:13px;height:274.500px"></div>
<div class="abs" style="left:668.5px;top:19px;border:3px solid transparent;border-bottom:4.5px solid #8c8c8c;border-top:0"></div>
<div class="abs" style="left:668.5px;top:452.5px;border:3.3px solid transparent;border-top:4.8px solid #8c8c8c;border-bottom:0"></div>
<div class="abs" style="left:679px;top:16px;width:3px;height:458px;background:#262626"></div>
<div class="track" style="left:1px;top:458px;width:678px;height:15px"></div>
<div class="thumbh" style="left:260px;top:459px;width:156px;height:13px"></div>
<div class="abs" style="left:3px;top:462.5px;border:3px solid transparent;border-right:4.5px solid #8c8c8c;border-left:0"></div>
<div class="abs" style="left:672.5px;top:462.3px;border:3.3px solid transparent;border-left:4.8px solid #8c8c8c;border-right:0"></div>
</div>
<!-- NAVIGATOR -->
<div id="nav" class="abs" style="left:818px;top:56.500px;width:206px;height:123px">
<div class="phead" style="left:0;top:0;width:206px;height:16.500px"><span class="abs" style="left:0;width:182px;text-align:center">Navigator</span><svg class="abs" style="right:16.500px;top:3.500px" width="8" height="8" viewBox="0 0 8 8"><path d="M3 1.500H.6v6h6V5" fill="none" stroke="#a8a8a8" stroke-width="1"/><path d="M3.500 4.500 7.300.7M4.500.6h3v3" fill="none" stroke="#a8a8a8" stroke-width="1"/></svg><svg class="abs" style="right:4.500px;top:4.500px" width="7" height="6" viewBox="0 0 7 6"><path d="M.8.500l5.400 5M6.200.5.800 5.500" stroke="#d2d2d2" stroke-width="1.700"/></svg></div>
<div class="nbtn" style="left:2.5px"><svg viewBox="0 0 14 14"><circle cx="6" cy="6" r="3.500" fill="none" stroke="#dcdcdc" stroke-width="1.200"/><path d="M8.700 8.700 12 12" stroke="#dcdcdc" stroke-width="1.700"/><path d="M5.400 4.900 6.300 4.300V7.800" stroke="#dcdcdc" stroke-width=".9" fill="none"/></svg></div>
<div class="abs" style="left:24.5px;top:23px;width:1px;height:9px;background:#484848"></div>
<div class="nbtn" style="left:28px"><svg viewBox="0 0 14 14"><circle cx="6" cy="6" r="3.500" fill="none" stroke="#dcdcdc" stroke-width="1.200"/><path d="M8.700 8.700 12 12" stroke="#dcdcdc" stroke-width="1.700"/><path d="M4.200 6h3.600M6 4.200v3.600" stroke="#dcdcdc" stroke-width="1"/></svg></div>
<div class="nbtn" style="left:48.5px"><svg viewBox="0 0 14 14"><rect x="2" y="3" width="10" height="8" fill="#c4c4c4"/><path d="M3 4h2.600L3 6.600zM11 4H8.400L11 6.600zM3 10h2.600L3 7.400zM11 10H8.400L11 7.400z" fill="#434343"/><rect x="5.500" y="5.800" width="3" height="2.400" fill="#434343"/></svg></div>
<div class="nbtn" style="left:69px"><svg viewBox="0 0 14 14"><circle cx="6" cy="6" r="3.500" fill="none" stroke="#dcdcdc" stroke-width="1.200"/><path d="M8.700 8.700 12 12" stroke="#dcdcdc" stroke-width="1.700"/><path d="M4.200 6h3.600" stroke="#dcdcdc" stroke-width="1"/></svg></div>
<div class="abs" style="left:90.5px;top:23px;width:1px;height:9px;background:#484848"></div>
<div class="nbtn" style="left:94px"><svg viewBox="0 0 14 14"><path d="M5 2.800A4.900 4.900 0 1 1 2.300 5.800" fill="none" stroke="#dcdcdc" stroke-width="1.200"/><path d="M6.200 1 3.600 3.200 6.600 4.600z" fill="#dcdcdc"/><rect x="4.800" y="5.300" width="4.400" height="3.400" fill="#dcdcdc" transform="rotate(-20 7 7)"/></svg></div>
<div class="nbtn" style="left:114.5px;background:#222;border-color:#3c3c3c"><svg viewBox="0 0 14 14"><rect x="3.800" y="4.200" width="6.400" height="5.600" fill="#f2f2f2"/><path d="M1.800 2.200h3l-3 3zM12.200 2.200h-3l3 3zM1.800 11.800h3l-3-3zM12.200 11.800h-3l3-3z" fill="#f2f2f2"/></svg></div>
<div class="nbtn" style="left:135px"><svg viewBox="0 0 14 14"><path d="M9 2.800A4.900 4.900 0 1 0 11.700 5.800" fill="none" stroke="#dcdcdc" stroke-width="1.200"/><path d="M7.800 1l2.600 2.200-3 1.400z" fill="#dcdcdc"/><rect x="4.800" y="5.300" width="4.400" height="3.400" fill="#dcdcdc" transform="rotate(20 7 7)"/></svg></div>
<div class="abs" style="left:156.5px;top:23px;width:1px;height:9px;background:#484848"></div>
<div class="nbtn" style="left:160.5px"><svg viewBox="0 0 14 14"><path d="M3 6.500C3 3 8.500 2.500 10.500 5" fill="none" stroke="#dcdcdc" stroke-width="1.100"/><rect x="2.500" y="6.500" width="3.600" height="5.500" fill="#dcdcdc"/><rect x="8.300" y="6.500" width="3.400" height="5.500" fill="none" stroke="#dcdcdc" stroke-width="1.100"/></svg></div>
<div class="abs" style="left:1px;top:38px;width:205px;height:82.500px;background:#3b3b3b"></div>
<svg class="abs" style="left:49px;top:38px" width="107" height="80.500" viewBox="867 95 107 80.500">
<rect x="867" y="95" width="107" height="80.500" fill="#fff"/>
<g transform="translate(875.300 115.300) scale(0.1312) translate(-136 -73)">
<g fill="none" stroke="#000" stroke-width="4.5" stroke-linecap="round" stroke-linejoin="round">
<path d="M296 354C284 350 268 336 259 321 253 310 251.500 298 252 285 252.500 262 258 240 268 218 278 197 292 180 308 169.500 325 159 345 156.500 364 157 386 157.500 408 166 425 181 442 196 456 220 464 243 470 260 473 280 472.800 296 472.500 310 466 325 455.600 337 449 343 440 346.500 424.400 348.750"/>
<path d="M437 346.500C443 349 448.500 353.500 452.500 358.750 457 365 460 371 461 380.600 461 384.500 459 387.500 455.600 389.400 451.500 391.500 447 391 443 389.400 438.500 387.500 435 386 432 383.750 429.500 381.500 428.500 378.500 427.500 375"/>
<path d="M296 354C294 349 293.500 344 293.750 340 293.500 335 293.500 329 293.750 324 294.500 319 296 314 297.800 310 299.500 306.500 301.500 304.500 304 304 306.500 304 308.500 305 310 307 312.500 310 314 313 315 316.500 316 321 316.500 326 316.500 330.600" stroke-width="4.05"/>
<path d="M287 305.600C288 302 289.500 299.500 291.500 297.800 294 295.500 297.500 294.500 301 294.700 304.500 295 307.500 296 310 297.800 312 299.500 314 301.500 315 304"/>
<path d="M296 354C298 356.500 300 358.500 302.500 360 306 362.500 310.500 364.500 315 366.500"/>
<path d="M315 368C314 375 313 382 312.500 390 311 400 310 410 309.300 420 308 432 307.800 442 308.100 450.300 308.500 459 309.800 467 311.700 473.800 313 480 315 486 317.500 490.200 319.500 494.500 322.500 497.500 325.700 499.600 328 501 330.500 501.600 332.800 501.500 336 501 339 499.500 341 497.200 343.500 494 345 490 346.100 485.500 347.500 481 348.200 477 348.500 472.600"/>
<path d="M341.400 465.600C345 468 348.500 470.300 352.700 471.900 358 474 363.500 475.300 369.100 475.700 374 476 379 475.500 383.200 474.300 388 473 393 471.200 397.200 469.100 399 468.200 400.500 467.200 401.900 466.300"/>
<path d="M400.700 470.300C405 468.500 409.500 466.300 413.600 463.900" stroke-width="3.8249999999999997"/>
<path d="M411.800 467.900C412.800 472 414.200 475.500 416 478.500 418 482.500 420.200 485.500 423 487.400 425.200 489 427.500 489.900 430 489.700 432.800 489 435 486.500 436.600 483.200 438.500 479 439.500 474 439.900 469.100 440.500 463 440.800 456.500 440.600 450.300 440.200 445 439.200 440.500 437.600 436.300 436.300 432.500 434.600 429.300 432.400 426.900 430.500 425.200 428 424.200 425.400 424.100 422.500 424.200 419.700 424.700 417.200 425.700 414.700 427 412.600 429 410.800 431.600"/>
<path d="M419.700 374.400C421.500 381.500 423 388.500 424.400 396 425.500 404 427 412 429 419.700 429.400 421 429.500 422 429.600 423"/>
<path d="M387.500 260.300 376.500 269.700 392 276.900" stroke-width="2.8"/>
<path d="M341.500 279.500C340.500 282 341.500 285.500 343.500 287.200 346 289.200 349.500 289 352 287.200 354 285.500 355 283 355 280 355.300 283 356.200 285.500 358 287 360.500 288.800 364 288.600 366 286.800 368 285 368.800 282 368 279" stroke-width="2.8"/>
<path d="M364 152C364 146 364.800 140 366.700 134.500 367.800 131 369.200 128 370.900 125.900" stroke-width="2.800"/>
</g>
<path d="M370.900 125.900C364 122 359.500 117 357.300 112.600 355 108 353.750 104 353.750 100 353.500 95 354.200 91 355.800 87.600 357.200 84 359.500 81.300 362 81 365 80.800 368 83 369.800 86 372.200 89.500 374.200 94 375 98.500 375.700 103 375.600 108 374.500 112.600 373.800 117.500 372.500 122 370.900 125.900Z" fill="#30e410" stroke="#000" stroke-width="4.5" stroke-linejoin="round"/>
<path d="M370.900 125.900C374 123.500 377.500 121.800 381.500 120.400 386 118.500 391 117.200 395.600 116.500 400 115.800 404.200 115.800 408 116.500 412 117.500 415.200 119.300 417.500 122 420.200 125 422 129 422.200 133 422.200 136.500 420.500 139.800 417.500 142.300 415 144.800 411.500 146.600 408 147.800 405 148.300 401.800 147.500 398.750 146.200 394.800 144.500 391.200 142 387.800 139.200 384 136.800 380.300 134.200 376.900 131.400 374.700 129.600 372.700 127.700 370.900 125.900Z" fill="#30e410" stroke="#000" stroke-width="4.5" stroke-linejoin="round"/>
<path d="M362.300 102.500C361.300 103.500 361.600 106 362.200 108 363.800 113.500 366.300 118.500 369.300 123.500 367.500 117.500 365.500 111.500 364.300 105 364 103.500 363.300 102 362.300 102.500Z" fill="#000"/>
<path d="M383 131.300 389.500 129.800 398.750 130.600 390.500 132.800Z" fill="#052" stroke="#000" stroke-width=".6"/>
<circle cx="322.200" cy="271.250" r="9.800" fill="#000"/>
<ellipse cx="296.900" cy="281.250" rx="10" ry="4.600" fill="#f41b0f" transform="rotate(3 296.900 281.250)"/>
<ellipse cx="407.200" cy="274.400" rx="11" ry="4.900" fill="#f41b0f" transform="rotate(-4 407.200 274.400)"/>
<path d="M429.500 106l1.600 2" stroke="#cfeab8" stroke-width="1"/>
<text x="736.500" y="96.800" font-family="Liberation Sans,sans-serif" font-size="16.500" fill="#111">Meoxik</text>
<text x="737" y="120.800" font-family="Liberation Sans,sans-serif" font-size="16.500" letter-spacing="1.150" fill="#111">#Hoidap</text>
</g>
<rect x="875.300" y="115.300" width="87" height="57" fill="none" stroke="#e01414" stroke-width="1.300"/>
</svg>
</div>
<!-- LAYER -->
<div id="layer" class="abs" style="left:818px;top:179.500px;width:206px;height:220.500px">
<div class="phead" style="left:0;top:0;width:206px"><span class="abs" style="left:0;width:182px;text-align:center">Layer</span><svg class="abs" style="right:16.500px;top:3.500px" width="8" height="8" viewBox="0 0 8 8"><path d="M3 1.500H.6v6h6V5" fill="none" stroke="#a8a8a8" stroke-width="1"/><path d="M3.500 4.500 7.300.7M4.500.6h3v3" fill="none" stroke="#a8a8a8" stroke-width="1"/></svg><svg class="abs" style="right:4.500px;top:4.500px" width="7" height="6" viewBox="0 0 7 6"><path d="M.8.500l5.400 5M6.200.5.800 5.500" stroke="#d2d2d2" stroke-width="1.700"/></svg></div>
<span class="lbl" style="left:4px;top:21px">Opacity</span>
<div class="abs" style="left:57px;top:20px;width:116px;height:11px;background:linear-gradient(90deg,#72bbf5,#4a92d2);border:1px solid #3577b4"></div>
<span class="lbl" style="left:178px;top:21px">100 %</span>
<span class="lbl" style="left:4px;top:40px">Blending</span>
<div class="abs" style="left:57px;top:36.700px;width:145px;height:15.300px;background:#454545;border-radius:2px"><span class="lbl" style="left:2px;top:2.500px">Normal</span><div class="abs" style="left:136.500px;top:6.500px;border:2.500px solid transparent;border-top:2.800px solid #969696;border-bottom:0"></div></div>
<div class="abs" style="left:7px;top:60px;width:8px;height:8px;border:1px solid #b0b0b0"></div>
<span class="lbl" style="left:18px;top:59px">Protect Alpha</span>
<div class="abs" style="left:77px;top:60px;width:8px;height:8px;border:1px solid #b0b0b0"></div>
<span class="lbl" style="left:89px;top:59px">Clipping</span>
<div class="abs" style="left:143px;top:60px;width:8px;height:8px;border:1px solid #b0b0b0"></div>
<span class="lbl" style="left:155px;top:59px">Lock</span>
<div class="abs" style="left:1px;top:74.500px;width:188px;height:119px;background:#3a3a3a"></div>
<div class="abs" style="left:1.800px;top:75.4px;width:187.200px;height:29px;background:#555"></div>
<div class="abs" style="left:5px;top:86.4px;width:7px;height:7px;border-radius:50%;background:#dadada"></div>
<div class="abs" style="left:27.500px;top:81.7px;width:25.700px;height:17.200px;background:#fff;overflow:hidden;font-size:7px;line-height:8.500px;color:#222;white-space:nowrap;letter-spacing:-.100px"><div style="margin-top:.500px">Meoxik</div><div>#Hoidap</div></div>
<span class="lbl" style="left:66px;top:83.4px;font-size:9.300px;line-height:12px;color:#fff;font-weight:normal;letter-spacing:0">Meoxik</span>
<div class="abs" style="left:1.800px;top:105.4px;width:187.200px;height:29px;background:#555"></div>
<div class="abs" style="left:16px;top:105.4px;width:173px;height:29px;background:#4f97d3"></div>
<div class="abs" style="left:5px;top:116.4px;width:7px;height:7px;border-radius:50%;background:#dadada"></div>
<div class="abs" style="left:27.500px;top:111.7px;width:25.700px;height:17.200px;background:#fff;background-image:linear-gradient(45deg,#e2e2e2 25%,transparent 25%,transparent 75%,#e2e2e2 75%),linear-gradient(45deg,#e2e2e2 25%,transparent 25%,transparent 75%,#e2e2e2 75%);background-size:6px 6px;background-position:0 0,3px 3px"><svg class="abs" style="left:0;top:0" width="26" height="18" viewBox="0 0 26 18"><path d="M9 6c1-1 2-1 3 0M8 9c0 4 1 6 2 6" stroke="#b5d8b0" stroke-width=".7" fill="none"/></svg></div>
<span class="lbl" style="left:66px;top:113.4px;font-size:9.300px;line-height:12px;color:#fff;font-weight:bold;letter-spacing:.600px">Layer1</span>
<div class="abs" style="left:1.800px;top:135.4px;width:187.200px;height:29px;background:#555"></div>
<div class="abs" style="left:5px;top:146.4px;width:7px;height:7px;border-radius:50%;background:#dadada"></div>
<div class="abs" style="left:27.500px;top:141.70000000000002px;width:25.700px;height:17.200px;background:#fff;background-image:linear-gradient(45deg,#e2e2e2 25%,transparent 25%,transparent 75%,#e2e2e2 75%),linear-gradient(45deg,#e2e2e2 25%,transparent 25%,transparent 75%,#e2e2e2 75%);background-size:6px 6px;background-position:0 0,3px 3px"><svg class="abs" style="left:0;top:0" width="26" height="18" viewBox="0 0 26 18"><path d="M9 6c1-1 2-1 3 0M8 9c0 4 1 6 2 6" stroke="#b5d8b0" stroke-width=".7" fill="none"/></svg></div>
<span class="lbl" style="left:66px;top:143.4px;font-size:9.300px;line-height:12px;color:#fff;font-weight:normal;letter-spacing:0">Layer1</span>
<svg class="abs" style="left:171.500px;top:112.500px" width="15" height="15" viewBox="0 0 15 15"><circle cx="7.500" cy="7.500" r="5" fill="none" stroke="#fff" stroke-width="3.400" stroke-dasharray="2.400 1.527"/><circle cx="7.500" cy="7.500" r="3.200" fill="none" stroke="#fff" stroke-width="2.800"/></svg>
<div class="track" style="left:190px;top:74.500px;width:14px;height:119px"></div>
<div class="thumb" style="left:190.500px;top:83.500px;width:13.500px;height:101.500px"></div>
<div class="abs" style="left:194.5px;top:76.5px;border:3px solid transparent;border-bottom:4.5px solid #8c8c8c;border-top:0"></div>
<div class="abs" style="left:194.5px;top:187px;border:3px solid transparent;border-top:4.5px solid #8c8c8c;border-bottom:0"></div>
<div class="sbtn" style="left:4px;top:196.500px;width:17.5px;height:17.500px"><div class="abs" style="left:.750px;top:.750px;width:14px;height:14px"><svg viewBox="0 0 14 14"><path d="M2.800 1.800h5.400L11.200 4.800V12.200H2.800z" fill="none" stroke="#dcdcdc" stroke-width="1.100"/><path d="M8 1.800v3.200h3.200" fill="none" stroke="#dcdcdc" stroke-width=".9"/></svg></div></div>
<div class="sbtn" style="left:24.4px;top:196.500px;width:17.5px;height:17.500px"><div class="abs" style="left:.750px;top:.750px;width:14px;height:14px"><svg viewBox="0 0 14 14"><path d="M2.800 1.800h5.400L11.200 4.800V12.200H2.800z" fill="none" stroke="#dcdcdc" stroke-width="1.100"/><path d="M8 1.800v3.200h3.200" fill="none" stroke="#dcdcdc" stroke-width=".9"/><text x="7" y="10.800" font-size="6.500" font-family="Liberation Sans,sans-serif" fill="#dcdcdc" text-anchor="middle" font-weight="bold">8</text></svg></div></div>
<div class="sbtn" style="left:44.7px;top:196.500px;width:17.5px;height:17.500px"><div class="abs" style="left:.750px;top:.750px;width:14px;height:14px"><svg viewBox="0 0 14 14"><path d="M2.800 1.800h5.400L11.200 4.800V12.200H2.800z" fill="none" stroke="#dcdcdc" stroke-width="1.100"/><path d="M8 1.800v3.200h3.200" fill="none" stroke="#dcdcdc" stroke-width=".9"/><text x="7" y="10.800" font-size="6.500" font-family="Liberation Sans,sans-serif" fill="#dcdcdc" text-anchor="middle" font-weight="bold">1</text></svg></div></div>
<div class="sbtn" style="left:65px;top:196.500px;width:22.4px;height:17.500px"><div class="abs" style="left:.750px;top:.750px;width:14px;height:14px"><svg viewBox="0 0 14 14"><path d="M2.800 1.800h5.400L11.200 4.800V12.200H2.800z" fill="none" stroke="#dcdcdc" stroke-width="1.100"/><path d="M8 1.800v3.200h3.200" fill="none" stroke="#dcdcdc" stroke-width=".9"/><path d="M7 7.500v4M5 9.500h4" stroke="#dcdcdc" stroke-width="1.100"/></svg></div><div class="abs" style="left:14.500px;top:6.500px;border:2.500px solid transparent;border-top:3px solid #ddd;border-bottom:0"></div></div>
<div class="sbtn" style="left:90.4px;top:196.500px;width:18px;height:17.500px"><div class="abs" style="left:.750px;top:.750px;width:14px;height:14px"><svg viewBox="0 0 14 14"><path d="M1.500 3.500h4l1 1.200h6V11.500h-11z" fill="#dcdcdc"/></svg></div></div>
<div class="abs" style="left:111.300px;top:201px;width:1px;height:9px;background:#484848"></div>
<div class="sbtn" style="left:115.8px;top:196.500px;width:17.5px;height:17.500px"><div class="abs" style="left:.750px;top:.750px;width:14px;height:14px"><svg viewBox="0 0 14 14"><rect x="2.500" y="4.500" width="7" height="7" fill="none" stroke="#dcdcdc" stroke-width="1.100"/><path d="M4.500 4.500v-2h7v7h-2" fill="none" stroke="#dcdcdc" stroke-width="1.100"/></svg></div></div>
<div class="sbtn" style="left:136px;top:196.500px;width:17.5px;height:17.500px"><div class="abs" style="left:.750px;top:.750px;width:14px;height:14px"><svg viewBox="0 0 14 14"><rect x="2" y="2.500" width="3" height="3" fill="#dcdcdc"/><rect x="2" y="8.500" width="3" height="3" fill="#dcdcdc"/><rect x="8" y="4.500" width="4.500" height="4.500" fill="#dcdcdc"/><path d="M5 4h1.500v6H5M6.500 7H8" stroke="#dcdcdc" stroke-width=".9" fill="none"/></svg></div></div>
<div class="abs" style="left:157.500px;top:201px;width:1px;height:9px;background:#484848"></div>
<div class="sbtn" style="left:161.5px;top:196.500px;width:17.5px;height:17.500px"><div class="abs" style="left:.750px;top:.750px;width:14px;height:14px"><svg viewBox="0 0 14 14"><path d="M3 4.500h8v8H3z" fill="none" stroke="#dcdcdc" stroke-width="1.200"/><path d="M2 3.800h10M5 2.200h4" stroke="#dcdcdc" stroke-width="1.300"/><path d="M5.300 5.500v6M7 5.500v6M8.700 5.500v6" stroke="#dcdcdc" stroke-width="1"/></svg></div></div>
</div>
<!-- BRUSH SIZE -->
<div id="bsize" class="abs" style="left:818px;top:402px;width:206px;height:129px;overflow:hidden">
<div class="phead" style="left:0;top:0;width:206px"><span class="abs" style="left:0;width:182px;text-align:center">Brush Size</span><svg class="abs" style="right:16.500px;top:3.500px" width="8" height="8" viewBox="0 0 8 8"><path d="M3 1.500H.6v6h6V5" fill="none" stroke="#a8a8a8" stroke-width="1"/><path d="M3.500 4.500 7.300.7M4.500.6h3v3" fill="none" stroke="#a8a8a8" stroke-width="1"/></svg><svg class="abs" style="right:4.500px;top:4.500px" width="7" height="6" viewBox="0 0 7 6"><path d="M.8.500l5.400 5M6.200.5.800 5.500" stroke="#d2d2d2" stroke-width="1.700"/></svg></div>
<div class="abs" style="left:1px;top:16px;width:189px;height:113px;background:#484848"></div>
<div class="bs" style="left:1px;top:16.0px"><span>7</span></div>
<div class="bs" style="left:31px;top:16.0px"><span>10</span></div>
<div class="bs" style="left:61px;top:16.0px"><span>12</span></div>
<div class="bs" style="left:91px;top:16.0px"><span>15</span></div>
<div class="bs" style="left:121px;top:16.0px"><span>20</span></div>
<div class="bs" style="left:151px;top:16.0px"><span>25</span></div>
<div class="bs" style="left:1px;top:53.5px"><span>30</span></div>
<div class="bs" style="left:31px;top:53.5px"><span>40</span></div>
<div class="bs" style="left:61px;top:53.5px"><span>50</span></div>
<div class="bs" style="left:91px;top:53.5px"><span>70</span></div>
<div class="bs" style="left:121px;top:53.5px"><span>100</span></div>
<div class="bs" style="left:151px;top:53.5px"><span>150</span></div>
<div class="bs" style="left:1px;top:91.0px"><span>200</span></div>
<div class="bs" style="left:31px;top:91.0px"><span>300</span></div>
<div class="bs" style="left:61px;top:91.0px"><span>400</span></div>
<div class="bs" style="left:91px;top:91.0px"><span>500</span></div>
<div class="bs" style="left:121px;top:91.0px"><span>700</span></div>
<div class="bs" style="left:151px;top:91.0px"><span>1000</span></div>
<svg class="abs" style="left:0;top:0" width="206" height="129" viewBox="0 0 206 129" fill="#f2f2f2"><circle cx="15" cy="31.7" r="2.75"/><circle cx="45" cy="31.7" r="3.75"/><circle cx="75" cy="31.7" r="4.75"/><circle cx="105" cy="31.7" r="5.75"/><circle cx="135" cy="31.7" r="7.5"/><circle cx="165" cy="31.7" r="9.0"/><circle cx="15" cy="69.2" r="9.0"/><circle cx="45" cy="69.2" r="9.0"/><circle cx="75" cy="69.2" r="9.0"/><circle cx="105" cy="69.2" r="9.0"/><circle cx="135" cy="69.2" r="9.0"/><circle cx="165" cy="69.2" r="9.0"/><circle cx="15" cy="106.7" r="9.0"/><circle cx="45" cy="106.7" r="9.0"/><circle cx="75" cy="106.7" r="9.0"/><circle cx="105" cy="106.7" r="9.0"/><circle cx="135" cy="106.7" r="9.0"/><circle cx="165" cy="106.7" r="9.0"/></svg>
<div class="track" style="left:190px;top:16px;width:14px;height:113px"></div>
<div class="thumb" style="left:191.500px;top:48.700px;width:13.500px;height:71.500px"></div>
<div class="abs" style="left:194.5px;top:18.5px;border:3px solid transparent;border-bottom:4.5px solid #8c8c8c;border-top:0"></div>
<div class="abs" style="left:194.5px;top:123px;border:3px solid transparent;border-top:4.5px solid #8c8c8c;border-bottom:0"></div>
</div>
<!-- STATUS -->
<div id="status" class="abs" style="left:0;top:531px;width:1024px;height:15px;background:#252525"><span class="lbl" style="left:4px;top:2.500px;color:#c8c8c8;font-size:8.4px">1600 * 1200 pixel</span><span class="lbl" style="left:75.7px;top:2.500px;color:#c8c8c8;font-size:8.4px">(11.6 * 8.7cm)</span><span class="lbl" style="left:136.8px;top:2.500px;color:#c8c8c8;font-size:8.4px">350 dpi</span><span class="lbl" style="left:171px;top:2.500px;color:#c8c8c8;font-size:8.4px">66 %</span><span class="lbl" style="left:198px;top:2.500px;color:#c8c8c8;font-size:8.4px">( 519, 1161 )</span><span class="lbl" style="left:250.7px;top:2.500px;color:#c8c8c8;font-size:9px">Draw a straight line by holding down Shift, Change a brush size by holding down Ctrl, Alt, and dragging</span></div>
<!-- TASKBAR -->
<div id="taskbar" class="abs" style="left:0;top:546px;width:1024px;height:30px;background:#0a0f2c;overflow:hidden">
<div class="abs" style="left:0;top:0;width:1024px;height:1px;background:#2c2c2c"></div>
<div class="abs" style="left:0;top:1px;width:1024px;height:1px;background:#4c5270"></div>
<div class="abs" style="left:0;top:2px;width:1024px;height:28px;background:radial-gradient(ellipse 130px 26px at 500px 12px,#15194c 0,rgba(21,25,76,0) 100%),radial-gradient(ellipse 110px 22px at 770px 6px,#13174a 0,rgba(19,23,74,0) 100%),radial-gradient(ellipse 90px 22px at 120px 20px,#101440 0,rgba(16,20,64,0) 100%),linear-gradient(90deg,#0a0c26 0,#0b0d2a 500px,#0a0c28 1024px)"></div>
<svg class="abs" style="left:5px;top:0" width="30" height="30" viewBox="0 0 30 30">
<defs><radialGradient id="orb" cx=".5" cy=".35" r=".7"><stop offset="0" stop-color="#7fc4ee"/><stop offset=".55" stop-color="#2a78b8"/><stop offset="1" stop-color="#0d2c5c"/></radialGradient></defs>
<circle cx="15" cy="15.500" r="13.500" fill="url(#orb)" stroke="#3e6ea0" stroke-width="1"/>
<ellipse cx="15" cy="9" rx="10" ry="6" fill="#fff" opacity=".22"/>
<path d="M8.500 10.500c2-1 3.800-1 5.500.2l-1.200 4.500c-1.700-1.100-3.500-1.100-5.500-.2z" fill="#e8652c"/>
<path d="M15.300 11.200c1.800 1.100 3.600 1.100 5.600.2l-1.200 4.500c-2 .9-3.800.9-5.600-.2z" fill="#8cc63e"/>
<path d="M7 16.200c2-.9 3.800-.9 5.500.2l-1.200 4.500c-1.700-1.100-3.500-1.100-5.500-.2z" fill="#3d9be0"/>
<path d="M13.800 17c1.800 1.100 3.600 1.100 5.600.2l-1.200 4.500c-2 .9-3.800.9-5.600-.2z" fill="#f5c52c"/>
</svg>
<svg class="abs" style="left:67px;top:4px" width="24" height="22" viewBox="0 0 24 22"><path d="M1.500 2 13 11 1.500 20z" fill="#6a41c6"/><path d="M22 2 10 11 22 20z" fill="#cdb7f4"/><path d="M10 11l3-2.300v4.600z" fill="#8d63d8"/></svg>
<svg class="abs" style="left:111px;top:2px" width="30" height="27" viewBox="0 0 30 27">
<text x="15.500" y="21.500" font-family="Liberation Sans,sans-serif" font-weight="bold" font-size="23.500" text-anchor="middle" fill="#2f8fe0" transform="skewX(-8)" style="letter-spacing:0">e</text>
<path d="M4 22.500C1.500 19 7 9 16 4.500 22 1.500 26 2.500 24.500 7" fill="none" stroke="#e8b422" stroke-width="2"/>
<path d="M4 22.500c2 2 6 .5 9-1.500" fill="none" stroke="#e8b422" stroke-width="1.800"/>
</svg>
<svg class="abs" style="left:158px;top:2px" width="28" height="27" viewBox="0 0 28 27">
<circle cx="13.600" cy="14" r="11.800" fill="#5fb04a"/>
<circle cx="13.600" cy="14.200" r="5.600" fill="none" stroke="#fff" stroke-width="2.400"/>
<circle cx="13.600" cy="14.200" r="2" fill="#fff"/>
<path d="M15 8.500 16.500 1.500 19 2.500 17 9zM18.500 10l5-6 2 1.800-5.500 5.400zM20.500 12.500l6-2.500.5 2.500-6 1.500z" fill="#f07a22" stroke="#fff" stroke-width=".7"/>
</svg>
<div class="abs" style="left:196.5px;top:1px;width:44px;height:30px;background:linear-gradient(#5a5b6b 0,#454657 45%,#2a2b3c 50%,#33344a 100%);border:1px solid #6f7084;border-radius:2px"></div>
<div class="abs" style="left:243px;top:1px;width:44px;height:30px;background:linear-gradient(#9c9dab 0,#80818f 45%,#5d5e6c 50%,#6f7080 100%);border:1px solid #b8b9c6;border-radius:2px"></div>
<div class="abs" style="left:289.5px;top:1px;width:44px;height:30px;background:linear-gradient(#5a5b6b 0,#454657 45%,#2a2b3c 50%,#33344a 100%);border:1px solid #6f7084;border-radius:2px"></div>
<svg class="abs" style="left:207px;top:3.500px" width="23" height="23" viewBox="0 0 23 23">
<circle cx="11.500" cy="11.500" r="11" fill="#fff"/>
<path d="M11.500 11.500 2 6A11 11 0 0 1 21 6z" fill="#e33b2e"/>
<path d="M11.500 11.500 21 6A11 11 0 0 1 11.500 22.500z" fill="#f7c71f"/>
<path d="M11.500 11.500v11A11 11 0 0 1 2 6z" fill="#2da94f"/>
<circle cx="11.500" cy="11.500" r="5.200" fill="#fff"/>
<circle cx="11.500" cy="11.500" r="4.100" fill="#3f86f0"/>
</svg>
<svg class="abs" style="left:253px;top:2.500px" width="24" height="25" viewBox="0 0 24 25">
<defs><linearGradient id="mb" x1="0" y1="0" x2="1" y2="1"><stop offset="0" stop-color="#f0a020"/><stop offset=".35" stop-color="#e8402a"/><stop offset=".65" stop-color="#28b060"/><stop offset="1" stop-color="#18a8d8"/></linearGradient></defs>
<rect x=".5" y=".5" width="23" height="24" rx="4.500" fill="#f4f4f4"/>
<path d="M13.500 4C9 6 5.500 10 5.500 14.200c0 3.600 2.900 6.300 6.500 6.300s6.500-2.700 6.500-6.300c0-2.500-1.500-4.200-3.500-5.200.3-1.800-.3-3.500-1.500-5z" fill="url(#mb)"/>
<path d="M5.600 13c2 1 6 0 9.400-4-4-2-8 0-9.400 4z" fill="#e8402a" opacity=".9"/>
<path d="M13.500 4c-2.500 1.200-4.700 3-6.200 5 2-.6 5-.6 7.700 0 .3-1.800-.3-3.500-1.500-5z" fill="#f5a623"/>
</svg>
<svg class="abs" style="left:297px;top:3px" width="30" height="26" viewBox="0 0 30 26">
<path d="M13 5C6 5 2 9.500 2 14c0 4 3.500 7.500 9 7.500 2 0 2.600-1.200 2-2.400-.7-1.500.2-3 2-3h3c3 0 5-2 5-4.600C23 7.500 19 5 13 5z" fill="#d6e4f2" stroke="#8aa0bc" stroke-width=".8"/>
<circle cx="7" cy="11.500" r="1.900" fill="#e0503c"/><circle cx="10.500" cy="8" r="1.900" fill="#6cc24a"/><circle cx="15.500" cy="7.500" r="1.900" fill="#f0c030"/><circle cx="8" cy="16.500" r="1.900" fill="#4a8fe0"/>
<path d="M25.500 1.500 15 22" stroke="#d88a3c" stroke-width="2.200" stroke-linecap="round"/>
<path d="M25.800 1c.8.300.900 1.200.5 2.200l-1.500 3-1.600-.8 1.500-3c.4-1 .8-1.600 1.100-1.400z" fill="#e8c088"/>
</svg>
<span class="lbl" style="left:923px;top:7.800px;font-size:8.800px;line-height:12px;color:#d4d6e6">EN</span>
<div class="abs" style="left:946.500px;top:13.500px;border:3px solid transparent;border-bottom:3.500px solid #f0f0f0;border-top:0"></div>
<span class="lbl" style="left:944px;top:1.500px;width:80px;text-align:center;font-size:8.800px;line-height:12px;color:#f4f4f8">7:55 PM</span>
<span class="lbl" style="left:944px;top:15.500px;width:78px;text-align:center;font-size:8.800px;line-height:12px;color:#f4f4f8">7/29/2021</span>
<div class="abs" style="left:1013.500px;top:1px;width:11px;height:30px;background:linear-gradient(#8c8e9c 0,#55566a 40%,#25263a 50%,#2d2e44 100%);border-left:1px solid #9a9cac"></div>
</div>

</div>
</body>
</html>
